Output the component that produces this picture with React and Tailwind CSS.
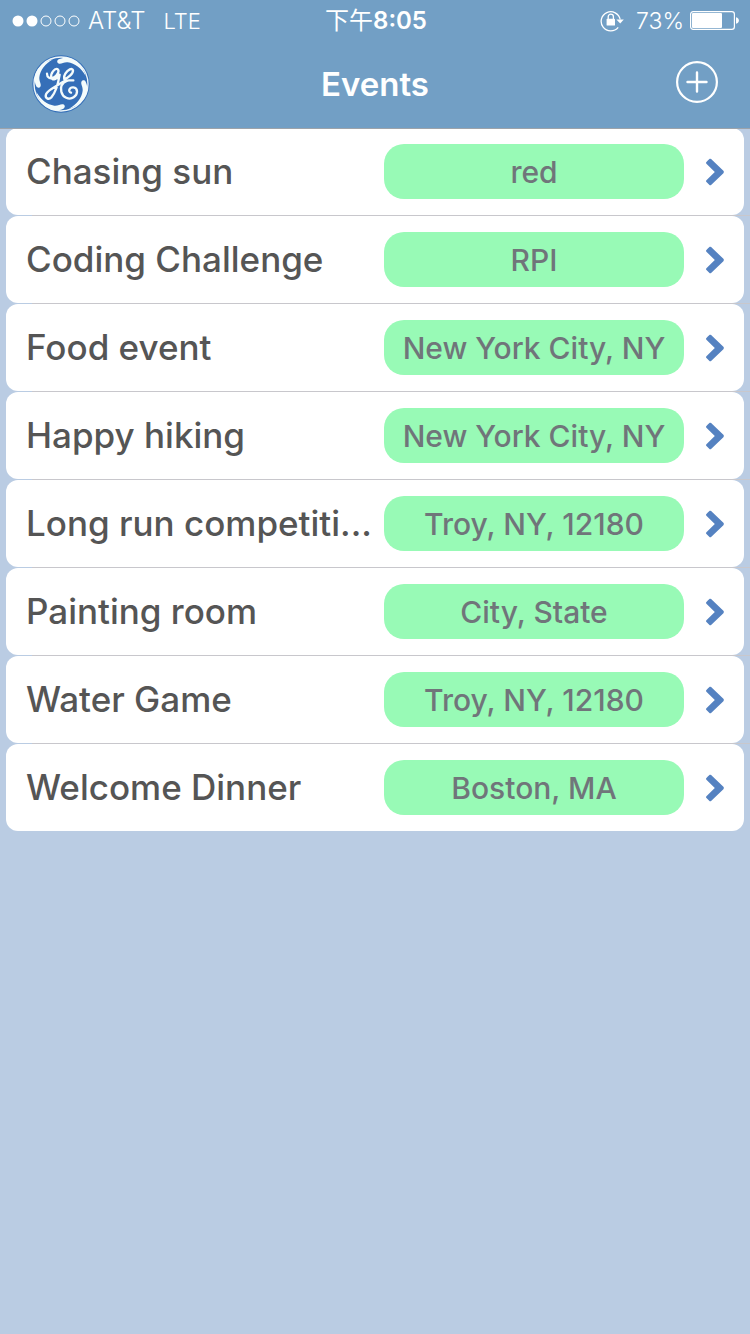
const events = [
  { name: 'Chasing sun', place: 'red' },
  { name: 'Coding Challenge', place: 'RPI' },
  { name: 'Food event', place: 'New York City, NY' },
  { name: 'Happy hiking', place: 'New York City, NY' },
  { name: 'Long run competiti...', place: 'Troy, NY, 12180' },
  { name: 'Painting room', place: 'City, State' },
  { name: 'Water Game', place: 'Troy, NY, 12180' },
  { name: 'Welcome Dinner', place: 'Boston, MA' },
];

function SignalDots() {
  return (
    <svg width="68" height="12" viewBox="0 0 68 12" fill="none" stroke="#fff" aria-hidden="true">
      <circle cx="6" cy="6" r="5.5" fill="#fff" stroke="none" />
      <circle cx="20" cy="6" r="5.5" fill="#fff" stroke="none" />
      <circle cx="34" cy="6" r="5" />
      <circle cx="48" cy="6" r="5" />
      <circle cx="62" cy="6" r="5" />
    </svg>
  );
}

function RotationLock() {
  return (
    <svg width="24" height="22" viewBox="0 0 24 22" fill="none" stroke="#fff" aria-hidden="true">
      <path d="M18.2 17.4A9.6 9.6 0 1 1 20.2 9.5" strokeWidth="1.3" />
      <path d="M16.4 9.5h7.4L20.2 13.4z" fill="#fff" stroke="none" />
      <rect x="6.6" y="8.8" width="8.4" height="6.8" rx="0.6" fill="#fff" stroke="none" />
      <path d="M8.2 9.400V6.800a2.600 2.600 0 0 1 5.200 0v2.600" strokeWidth="1.3" />
    </svg>
  );
}

function Battery() {
  return (
    <svg width="50" height="20" viewBox="0 0 50 20" fill="none" aria-hidden="true">
      <rect x="0.6" y="0.6" width="43.8" height="17.8" rx="2.6" stroke="#fff" strokeWidth="1.2" />
      <rect x="2" y="2" width="30" height="15" rx="1" fill="#fff" />
      <path d="M46 6.2c2 .6 2.900 1.700 2.900 3.300s-.9 2.700-2.900 3.300z" fill="#fff" />
    </svg>
  );
}

function Swirl({ turn }) {
  return (
    <path
      transform={`rotate(${turn} 108 108)`}
      d="M102 47C95 45 95 37 101 34C110 29 122 28 133 30C158 38 176 58 182 84C168 60 150 46 128 43C116 42 109 49 102 47Z"
      fill="#f4fbfb"
    />
  );
}

function Logo() {
  return (
    <svg className="size-[58px]" viewBox="21 21 174 174" fill="none" aria-hidden="true">
      <circle cx="108" cy="108" r="86" fill="#356fb8" />
      <circle cx="108" cy="108" r="81" stroke="#eef7fa" strokeWidth="4" />
      <Swirl turn={0} />
      <Swirl turn={90} />
      <Swirl turn={180} />
      <Swirl turn={270} />
      <g stroke="#f4fbfb" strokeWidth="7" strokeLinecap="round" strokeLinejoin="round">
        <path d="M66 77C66 89 76 94 86 89C98 83 105 67 97 63C89 60 76 77 79 88C82 99 95 95 104 80C100 104 92 134 79 148C71 156 59 151 63 139C69 125 94 116 111 103C123 94 132 98 145 97" />
        <path d="M118 94C128 91 145 77 144 67C142 58 128 65 121 77C115 87 116 97 125 99C111 105 106 118 109 131C113 148 132 157 146 148C160 139 159 119 145 118C133 117 128 131 138 134" />
      </g>
    </svg>
  );
}

function PlusCircle() {
  return (
    <svg className="size-[42px]" viewBox="0 0 42 42" fill="none" stroke="#fff" aria-hidden="true">
      <circle cx="21" cy="21" r="19.900" strokeWidth="2.200" />
      <path d="M21 11.500v19M11.500 21h19" strokeWidth="2.400" strokeLinecap="round" />
    </svg>
  );
}

function Chevron() {
  return (
    <svg className="h-7 w-5 shrink-0" viewBox="0 0 20 28" fill="none" aria-hidden="true">
      <path
        d="M3.800 2.600 5.700 0.800Q6.400 0.400 7.100 1L19.400 12.800Q20.300 14 19.400 15.200L7.100 27Q6.400 27.600 5.700 27.200L2.200 23.800Q1.800 23 2.400 22.300L10.800 14 2.400 5.700Q1.800 5 2.200 4.200Z"
        fill="#5582c1"
      />
    </svg>
  );
}

function StatusBar() {
  return (
    <div className="grid h-10 grid-cols-[1fr_auto_1fr] items-center pt-0.5 pr-2.5 pl-3 text-[24px] leading-7">
      <div className="flex items-center gap-2">
        <SignalDots />
        <span className="font-light">AT&amp;T</span>
        <span className="ml-2.5 text-[22px] font-light">LTE</span>
      </div>
      <time className="font-semibold">
        <span className="font-normal">下午</span>8:05
      </time>
      <div className="flex items-center justify-end">
        <RotationLock />
        <span className="mr-1.5 ml-3 text-[23px] font-light">73%</span>
        <Battery />
      </div>
    </div>
  );
}

export default function App() {
  return (
    <div className="min-h-screen bg-[#bacce3] font-['Inter','Noto_Sans_CJK_SC',sans-serif]">
      <header className="relative bg-[#729fc5] text-white shadow-[0_1px_0_#9da3aa]">
        <StatusBar />
        <div className="grid h-22 grid-cols-[1fr_auto_1fr] items-center px-8">
          <a href="#home" aria-label="Home" className="justify-self-start">
            <Logo />
          </a>
          <h1 className="text-[33px] leading-10 font-semibold">Events</h1>
          <button type="button" aria-label="Add event" className="mb-1 justify-self-end">
            <PlusCircle />
          </button>
        </div>
      </header>
      <main>
        <ul>
          {events.map((event) => (
            <li key={event.name} className="group">
              <a
                href="#event"
                className="mx-1.5 flex h-[87px] items-center rounded-xl bg-white px-5"
              >
                <span className="min-w-0 flex-1 truncate pb-0.5 text-[35px] leading-[48px] font-medium text-[#555]">
                  {event.name}
                </span>
                <span className="ml-2 h-[55px] w-[300px] shrink-0 rounded-[20px] bg-[#98fab6] text-center text-[30px] leading-[56px] font-medium text-[#70757a]">
                  {event.place}
                </span>
                <span className="ml-5 flex">
                  <Chevron />
                </span>
              </a>
              <div className="ml-8 h-px bg-[#c8c7cc] group-last:bg-transparent" />
            </li>
          ))}
        </ul>
      </main>
    </div>
  );
}
